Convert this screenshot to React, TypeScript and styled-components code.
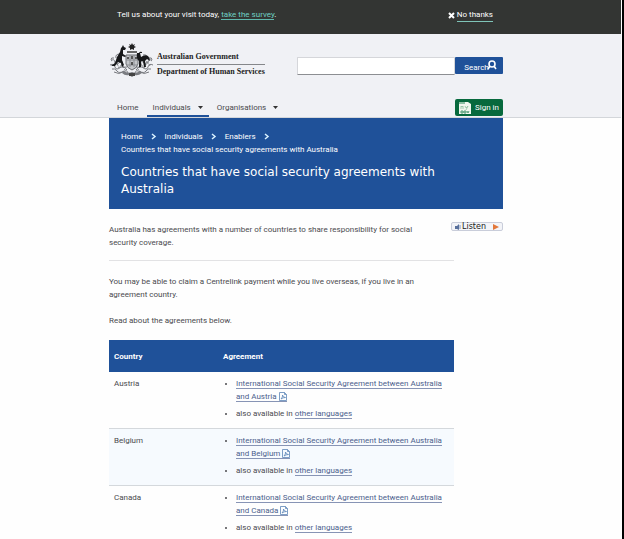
import React from "react";
import styled, { createGlobalStyle } from "styled-components";

const sans = 'Roboto, "Noto Sans", sans-serif';
const blue = "#1f5199";

const GlobalStyle = createGlobalStyle`
  * { box-sizing: border-box; }
  html { background: #000; min-height: 100%; }
  body { margin: 0 2px 0 0; background: #fefefe; border-right: 1px solid #fff; min-height: 100vh; }
  body, button, input { font-family: ${sans}; font-size: 8px; line-height: 13px; color: #4a4a4e; }
  a { color: inherit; text-decoration: none; }
  p { margin: 0; }
`;

const Page = styled.div`
  overflow: hidden;
`;

const Container = styled.div`
  width: calc(100% - 24px);
  max-width: 394px;
  margin: 0 auto;
`;

const Band = styled.div`
  padding-right: 9px;
`;

const SurveyBand = styled(Band)`
  background: #333533;
  color: #fff;
  height: 34px;
`;

const SurveyRow = styled(Container)`
  display: flex;
  justify-content: space-between;
  padding: 8px 10px 0 8px;
`;

const SurveyLink = styled.a`
  color: #6fd0c4;
  border-bottom: 1px solid #5fb8ae;
`;

const Dismiss = styled.button`
  display: flex;
  align-items: center;
  gap: 2px;
  padding: 0;
  border: 0;
  background: none;
  color: #fff;
`;

const DismissText = styled.span`
  border-bottom: 1px solid #7fc4b8;
`;

const HeaderBand = styled(Band)`
  background: #f0f1f5;
  border-bottom: 1px solid #d3d6da;
`;

const BrandRow = styled(Container)`
  display: flex;
  justify-content: space-between;
  padding-top: 8px;
  height: 62px;
`;

const Brand = styled.a`
  display: flex;
  gap: 3px;
  height: 36px;
`;

const BrandText = styled.span`
  display: flex;
  flex-direction: column;
  padding-top: 9px;
  font: bold 8px/12px "Liberation Serif", serif;
  color: #222;
  white-space: nowrap;
`;

const BrandTop = styled.span`
  border-bottom: 1px solid #85878a;
  padding-bottom: 1px;
`;

const BrandBottom = styled.span`
  padding-top: 1px;
`;

const SearchForm = styled.form`
  display: flex;
  width: 206px;
  height: 18px;
  margin-top: 15px;
`;

const SearchInput = styled.input`
  flex: 1;
  min-width: 0;
  padding: 0 6px;
  background: #fff;
  border: 1px solid #d5d6da;
  border-bottom-color: #8c8e92;
  border-radius: 1px;
`;

const SearchButton = styled.button`
  display: flex;
  align-items: center;
  justify-content: center;
  width: 48px;
  height: 17px;
  padding: 4px 0 0 3px;
  border: 0;
  border-radius: 1px;
  background: ${blue};
  color: #fff;
  svg { margin: -5px 0 0 -2px; }
`;

const NavRow = styled(Container)`
  display: flex;
  justify-content: space-between;
  height: 21px;
  align-items: flex-end;
`;

const Nav = styled.nav`
  display: flex;
  gap: 2px;
  padding-left: 2px;
`;

const NavItem = styled.a<{ $active?: boolean }>`
  display: flex;
  align-items: center;
  gap: 7px;
  height: 18px;
  padding: 0 6px;
  border-bottom: 2px solid ${(p) => (p.$active ? blue : "transparent")};
`;

const SignIn = styled.button`
  display: flex;
  align-items: center;
  gap: 4px;
  width: 48px;
  height: 17px;
  margin-bottom: 1px;
  padding: 0 4px;
  border: 0;
  border-radius: 2px;
  background: #07693d;
  color: #fff;
  white-space: nowrap;
`;

const Hero = styled.section`
  background: ${blue};
  color: #fff;
  padding: 12px 12px 11px;
`;

const Crumbs = styled.nav`
  display: flex;
  flex-wrap: wrap;
  align-items: center;
  column-gap: 8px;
`;

const Title = styled.h1`
  margin: 8px 0 0;
  font: 500 12px/17px "DejaVu Sans", sans-serif;
`;

const Body = styled.div`
  display: flex;
  justify-content: space-between;
  align-items: flex-start;
`;

const Main = styled.main`
  flex: 0 1 345px;
  min-width: 0;
  padding-top: 14px;
`;

const Intro = styled.p`
  padding: 0 16px 11px 0;
  margin-bottom: 14px;
  border-bottom: 1px solid #e2e2e4;
`;

const Para = styled.p`
  margin-bottom: 13px;
`;

const Listen = styled.button`
  display: flex;
  flex: none;
  align-items: center;
  gap: 1px;
  width: 52px;
  height: 9px;
  margin: 13px 0 0 -3px;
  padding: 0 3px;
  border: 1px solid #c9cdda;
  border-radius: 2px;
  background: #f3f4f8;
  font: 8px/8px "DejaVu Sans", sans-serif;
  color: #222;
  svg:last-child { margin-left: auto; }
`;

const Table = styled.table`
  width: 100%;
  border-collapse: collapse;
`;

const HeadCell = styled.th`
  height: 32px;
  padding: 0 5px;
  background: ${blue};
  color: #fff;
  text-align: left;
  font-weight: 700;
  &:first-child { width: 109px; }
`;

const Row = styled.tr`
  border-bottom: 1px solid #d4d8dc;
  &:nth-child(even) { background: #f6fafe; }
`;

const Cell = styled.td`
  padding: 5px 5px 8px;
  vertical-align: top;
`;

const Items = styled.ul`
  margin: 0;
  padding: 0 0 0 13px;
  li + li { margin-top: 4px; }
`;

const TextLink = styled.a`
  color: #4c5f8d;
  border-bottom: 1px solid #8794b5;
  svg { vertical-align: -2px; margin-left: 2px; }
`;

const Crest = () => (
  <svg width="45" height="36" viewBox="0 0 45 36" aria-hidden="true">
    <g fill="none" stroke="#77797e" strokeWidth="1">
      <path d="M2 19q3-3 4 1t5 0q3-2 2 2t5 3M1 23q4-2 5 2t6 0q4-1 6 3M3 27q3-1 5 2t7 0M5 30q5 3 9 0t5 1M5 16q-3-1-3 2M43 19q-3-3-4 1t-5 0q-3-2-2 2t-5 3M44 23q-4-2-5 2t-6 0q-4-1-6 3M42 27q-3-1-5 2t-7 0M40 30q-5 3-9 0t-5 1M40 16q3-1 3 2M34 13q5-1 4 4M11 12q-5 0-4 4" />
      <path d="M4 24l3-5 3 7 3-4 3 6M41 24l-3-5-3 7-3-4-3 6" strokeDasharray="2 1" />
    </g>
    <path d="M23 1l1 2 2-1-1 2 2 1-2 1 0 2-2-1-2 1 0-2-2-1 2-1-1-2 2 1z" fill="#222" />
    <path d="M18 9h10v2H18z" fill="#666" />
    <path d="M17 13h12v9q-1 4-6 6-5-2-6-6z" fill="#c4c6ca" stroke="#6c6e73" />
    <path d="M17 18h12M21 13v12M25 13v12M18 23h10" stroke="#8c8e93" />
    <path d="M18 15h2v2h-2zM22 14h2v3h-2zM26 15h2v2h-2zM22 20h2v3h-2z" fill="#555" />
    <path d="M14 3l1 2 2 1-1 2-2 0 0 4 3 2-1 1-3-1 0 4 2 5-2 2-1-4-3-1-3 4-4 0 4-3 2-6 3-5 1-4 1-1z" fill="#17181a" />
    <path d="M30 11q1-2 3-1v1l-2 0 1 4q4-3 7-1 2 2 2 5l-3-2-2 2 1 6-2 0-1-6-2 0 0 6-2 0 0-6q-3-2-2-8z" fill="#17181a" />
    <path d="M15 29q4 3 8 1 4 2 8-1l2 2q-4 3-7 2l-3 2-3-2q-4 1-7-2z" fill="#7b7d82" />
    <path d="M20 31h6v3h-6z" fill="#444" />
  </svg>
);

const Magnifier = () => (
  <svg width="10" height="10" viewBox="0 0 10 10" fill="none" stroke="#fff" aria-hidden="true">
    <circle cx="5" cy="4" r="3" strokeWidth="1.6" />
    <path d="M3 6L1 9M7 6l2 3" strokeWidth="1.6" />
  </svg>
);

const Cross = () => (
  <svg width="7" height="7" viewBox="0 0 7 7" aria-hidden="true">
    <path d="M1 1l5 5M6 1L1 6" stroke="#fff" strokeWidth="2" />
  </svg>
);

const Caret = () => (
  <svg width="5" height="3" viewBox="0 0 5 3" aria-hidden="true">
    <path d="M0 0h5L2.5 3z" fill="#333" />
  </svg>
);

const Chevron = () => (
  <svg width="6" height="7" viewBox="0 0 6 7" fill="none" aria-hidden="true">
    <path d="M1 1l3 2.5-3 2.5" stroke="#d9f1ff" strokeWidth="1.5" />
  </svg>
);

const MyGov = () => (
  <svg width="12" height="12" viewBox="0 0 12 12" aria-hidden="true">
    <path d="M0 0h9l3 2v10H0z" fill="#f1f7ee" />
    <path d="M0 1h6" stroke="#2b8758" />
    <path d="M2 7V4l1 1 1-1v3M6 4l1 2 2-2-2 4" stroke="#8fc0a0" fill="none" strokeWidth=".8" />
    <path d="M2 9h2v2H2zM5 9h2v2H5zM8 9l1 2 1-2" stroke="#2b8758" fill="none" strokeWidth=".8" />
  </svg>
);

const Pdf = () => (
  <svg width="8" height="9" viewBox="0 0 8 9" fill="none" stroke="#5d86b8" strokeWidth=".8" aria-hidden="true">
    <path d="M.5.5h5l2 2v6h-7zM5.5.5v2h2M2 7q2-2 1.5-4Q4 5.5 6.5 5.5 4 5.500 2 7" />
  </svg>
);

const Speaker = () => (
  <svg width="6" height="6" viewBox="0 0 6 6" aria-hidden="true">
    <path d="M0 2h2l2-2v6L2 5H0z" fill="#58709c" />
    <path d="M5 1v4" stroke="#8396b8" />
  </svg>
);

const Play = () => (
  <svg width="6" height="6" viewBox="0 0 6 6" aria-hidden="true">
    <path d="M0 0l6 3-6 3z" fill="#e2783c" />
  </svg>
);

const countries = ["Austria", "Belgium", "Canada"];

export default function App() {
  return (
    <Page>
      <GlobalStyle />
      <SurveyBand>
        <SurveyRow>
          <p>
            Tell us about your visit today, <SurveyLink href="#survey">take the survey</SurveyLink>.
          </p>
          <Dismiss type="button">
            <Cross />
            <DismissText>No thanks</DismissText>
          </Dismiss>
        </SurveyRow>
      </SurveyBand>
      <HeaderBand as="header">
        <BrandRow>
          <Brand href="#home">
            <Crest />
            <BrandText>
              <BrandTop>Australian Government</BrandTop>
              <BrandBottom>Department of Human Services</BrandBottom>
            </BrandText>
          </Brand>
          <SearchForm role="search">
            <SearchInput type="text" aria-label="Search" />
            <SearchButton type="button">
              Search
              <Magnifier />
            </SearchButton>
          </SearchForm>
        </BrandRow>
        <NavRow>
          <Nav aria-label="Main">
            <NavItem href="#home">Home</NavItem>
            <NavItem href="#individuals" $active>
              Individuals <Caret />
            </NavItem>
            <NavItem href="#organisations">
              Organisations <Caret />
            </NavItem>
          </Nav>
          <SignIn type="button">
            <MyGov />
            Sign in
          </SignIn>
        </NavRow>
      </HeaderBand>
      <Band>
        <Container>
          <Hero>
            <Crumbs aria-label="Breadcrumb">
              <a href="#home">Home</a>
              <Chevron />
              <a href="#individuals">Individuals</a>
              <Chevron />
              <a href="#enablers">Enablers</a>
              <Chevron />
              <span>Countries that have social security agreements with Australia</span>
            </Crumbs>
            <Title>Countries that have social security agreements with Australia</Title>
          </Hero>
          <Body>
            <Main>
              <Intro>
                Australia has agreements with a number of countries to share responsibility for social security coverage.
              </Intro>
              <Para>
                You may be able to claim a Centrelink payment while you live overseas, if you live in an agreement country.
              </Para>
              <Para>Read about the agreements below.</Para>
              <Table>
                <thead>
                  <tr>
                    <HeadCell scope="col">Country</HeadCell>
                    <HeadCell scope="col">Agreement</HeadCell>
                  </tr>
                </thead>
                <tbody>
                  {countries.map((country) => (
                    <Row key={country}>
                      <Cell>{country}</Cell>
                      <Cell>
                        <Items>
                          <li>
                            <TextLink href={`#${country}`}>
                              International Social Security Agreement between Australia and {country}
                              <Pdf />
                            </TextLink>
                          </li>
                          <li>
                            also available in <TextLink href={`#${country}-languages`}>other languages</TextLink>
                          </li>
                        </Items>
                      </Cell>
                    </Row>
                  ))}
                </tbody>
              </Table>
            </Main>
            <Listen type="button">
              <Speaker />
              Listen
              <Play />
            </Listen>
          </Body>
        </Container>
      </Band>
    </Page>
  );
}
